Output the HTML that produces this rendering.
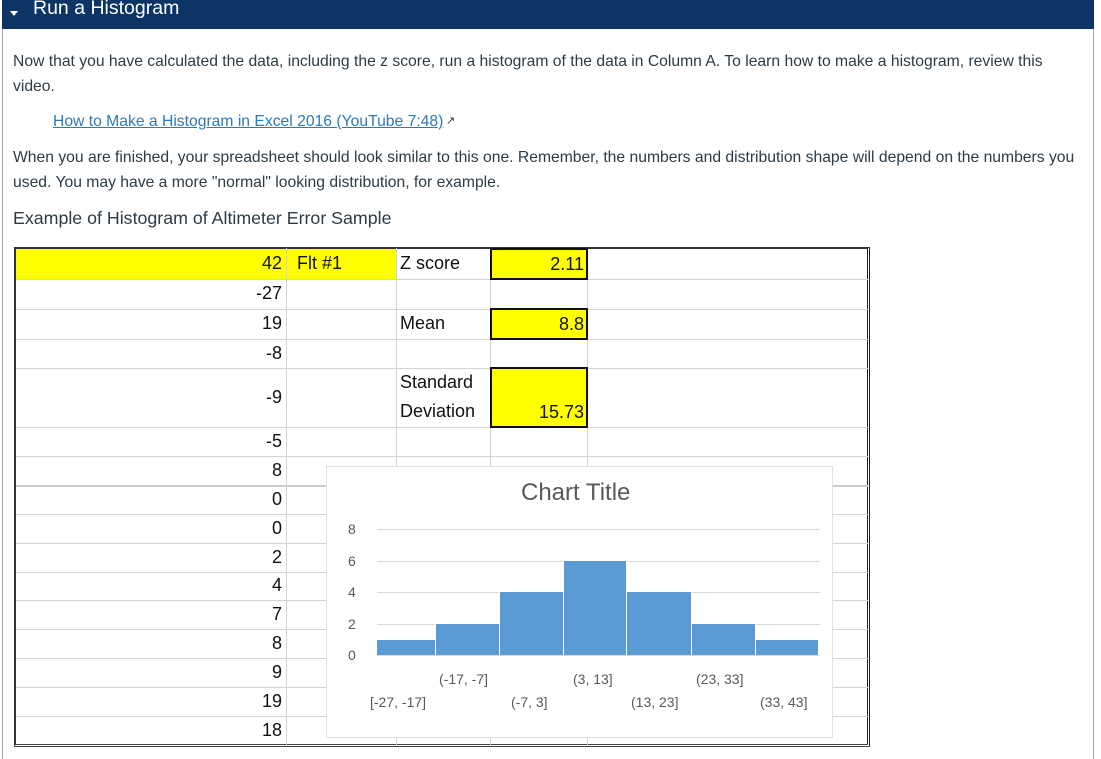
<!DOCTYPE html>
<html><head><meta charset="utf-8"><style>
*{margin:0;padding:0;box-sizing:border-box}
body{width:1101px;height:759px;background:#fff;position:relative;overflow:hidden;font-family:"Liberation Sans",sans-serif;color:#2d3b45}
.a{position:absolute;white-space:nowrap}
.hd{left:2px;top:0;width:1092px;height:29px;background:#0c3566}
.p{font-size:15.7px;color:#2d3b45}
.hl{left:0;height:1px;background:#d4d4d4}
.vl{top:248px;width:1px;background:#d4d4d4}
.n{font-size:18px;color:#111;text-align:right}
.c{font-size:18px;color:#111}
.yb{background:#ffff00;border:2px solid #111}
.ax{font-size:14px;color:#595959}
.bar{background:#5b9bd5;border-left:1px solid #fff;border-right:1px solid #fff}
</style></head><body>
<div class="a hd"></div>
<div class="a" style="left:10px;top:11px;width:0;height:0;border-left:4px solid transparent;border-right:4px solid transparent;border-top:5px solid #fff"></div>
<div class="a" style="left:33px;top:-3px;font-size:19.5px;color:#fff">Run a Histogram</div>
<div class="a" style="left:2px;top:29px;width:1px;height:730px;background:#aaa"></div>
<div class="a" style="left:1093px;top:29px;width:1px;height:730px;background:#aaa"></div>

<div class="a p" style="left:13px;top:53px">Now that you have calculated the data, including the z score, run a histogram of the data in Column A. To learn how to make a histogram, review this</div>
<div class="a p" style="left:13px;top:78px">video.</div>
<div class="a p" style="left:53px;top:113px;color:#2b7abc;text-decoration:underline">How to Make a Histogram in Excel 2016 (YouTube 7:48)</div>
<div class="a" style="left:446px;top:114px;font-size:11px;color:#333">&#8599;</div>
<div class="a p" style="left:13px;top:149px">When you are finished, your spreadsheet should look similar to this one. Remember, the numbers and distribution shape will depend on the numbers you</div>
<div class="a p" style="left:13px;top:174px">used. You may have a more "normal" looking distribution, for example.</div>
<div class="a" style="left:13px;top:208px;font-size:17.8px;color:#2d3b45">Example of Histogram of Altimeter Error Sample</div>

<div class="a" style="left:14px;top:247px;width:856px;height:500px;border:2px solid #333;border-right:3px double #222;border-bottom:3px double #444"></div>
<div class="a" style="left:16px;top:249px;width:380px;height:30px;background:#ffff00"></div>
<div class="a hl" style="top:279px;left:16px;width:852px"></div>
<div class="a hl" style="top:309px;left:16px;width:852px"></div>
<div class="a hl" style="top:339px;left:16px;width:852px"></div>
<div class="a hl" style="top:368px;left:16px;width:852px"></div>
<div class="a hl" style="top:427px;left:16px;width:852px"></div>
<div class="a hl" style="top:456px;left:16px;width:852px"></div>
<div class="a hl" style="top:485px;left:16px;width:852px;height:2px;background:#ccc"></div>
<div class="a hl" style="top:514px;left:16px;width:852px"></div>
<div class="a hl" style="top:543px;left:16px;width:852px"></div>
<div class="a hl" style="top:572px;left:16px;width:852px"></div>
<div class="a hl" style="top:600px;left:16px;width:852px"></div>
<div class="a hl" style="top:629px;left:16px;width:852px"></div>
<div class="a hl" style="top:658px;left:16px;width:852px"></div>
<div class="a hl" style="top:687px;left:16px;width:852px"></div>
<div class="a hl" style="top:716px;left:16px;width:852px"></div>
<div class="a vl" style="left:286px;height:497px"></div>
<div class="a vl" style="left:396px;height:497px"></div>
<div class="a vl" style="left:490px;height:497px"></div>
<div class="a vl" style="left:587px;height:497px"></div>

<div class="a n" style="left:200px;width:82px;top:253px">42</div>
<div class="a c" style="left:297px;top:253px">Flt #1</div>
<div class="a n" style="left:200px;width:82px;top:283px">-27</div>
<div class="a n" style="left:200px;width:82px;top:313px">19</div>
<div class="a n" style="left:200px;width:82px;top:343px">-8</div>
<div class="a n" style="left:200px;width:82px;top:387px">-9</div>
<div class="a n" style="left:200px;width:82px;top:431px">-5</div>
<div class="a n" style="left:200px;width:82px;top:460px">8</div>
<div class="a n" style="left:200px;width:82px;top:489px">0</div>
<div class="a n" style="left:200px;width:82px;top:518px">0</div>
<div class="a n" style="left:200px;width:82px;top:547px">2</div>
<div class="a n" style="left:200px;width:82px;top:575px">4</div>
<div class="a n" style="left:200px;width:82px;top:604px">7</div>
<div class="a n" style="left:200px;width:82px;top:633px">8</div>
<div class="a n" style="left:200px;width:82px;top:662px">9</div>
<div class="a n" style="left:200px;width:82px;top:691px">19</div>
<div class="a n" style="left:200px;width:82px;top:720px">18</div>

<div class="a c" style="left:400px;top:253px">Z score</div>
<div class="a c" style="left:400px;top:313px">Mean</div>
<div class="a c" style="left:400px;top:372px">Standard</div>
<div class="a c" style="left:400px;top:401px">Deviation</div>
<div class="a yb" style="left:490px;top:248px;width:98px;height:32px"></div>
<div class="a n" style="left:490px;width:94px;top:254px">2.11</div>
<div class="a yb" style="left:490px;top:308px;width:98px;height:32px"></div>
<div class="a n" style="left:490px;width:94px;top:314px">8.8</div>
<div class="a yb" style="left:490px;top:367px;width:98px;height:61px"></div>
<div class="a n" style="left:490px;width:94px;top:402px">15.73</div>

<div class="a" style="left:326px;top:466px;width:507px;height:272px;background:#fff;border:1px solid #e2e2e2"></div>
<div class="a" style="left:521px;top:479px;font-size:24px;color:#595959">Chart Title</div>
<div class="a" style="left:377px;top:529px;width:443px;height:1px;background:#d9d9d9"></div>
<div class="a" style="left:377px;top:561px;width:443px;height:1px;background:#d9d9d9"></div>
<div class="a" style="left:377px;top:592px;width:443px;height:1px;background:#d9d9d9"></div>
<div class="a" style="left:377px;top:624px;width:443px;height:1px;background:#d9d9d9"></div>
<div class="a" style="left:377px;top:655px;width:443px;height:1px;background:#d9d9d9"></div>
<div class="a ax" style="left:348px;top:521px">8</div>
<div class="a ax" style="left:348px;top:553px">6</div>
<div class="a ax" style="left:348px;top:584px">4</div>
<div class="a ax" style="left:348px;top:616px">2</div>
<div class="a ax" style="left:348px;top:647px">0</div>
<div class="a bar" style="left:376px;top:640px;width:60px;height:15px"></div>
<div class="a bar" style="left:435px;top:624px;width:65px;height:31px"></div>
<div class="a bar" style="left:499px;top:592px;width:65px;height:63px"></div>
<div class="a bar" style="left:563px;top:561px;width:64px;height:94px"></div>
<div class="a bar" style="left:626px;top:592px;width:66px;height:63px"></div>
<div class="a bar" style="left:691px;top:624px;width:65px;height:31px"></div>
<div class="a bar" style="left:755px;top:640px;width:64px;height:15px"></div>
<div class="a ax" style="left:439px;top:671px">(-17, -7]</div>
<div class="a ax" style="left:573px;top:671px">(3, 13]</div>
<div class="a ax" style="left:696px;top:671px">(23, 33]</div>
<div class="a ax" style="left:370px;top:694px">[-27, -17]</div>
<div class="a ax" style="left:511px;top:694px">(-7, 3]</div>
<div class="a ax" style="left:631px;top:694px">(13, 23]</div>
<div class="a ax" style="left:760px;top:694px">(33, 43]</div>
</body></html>
